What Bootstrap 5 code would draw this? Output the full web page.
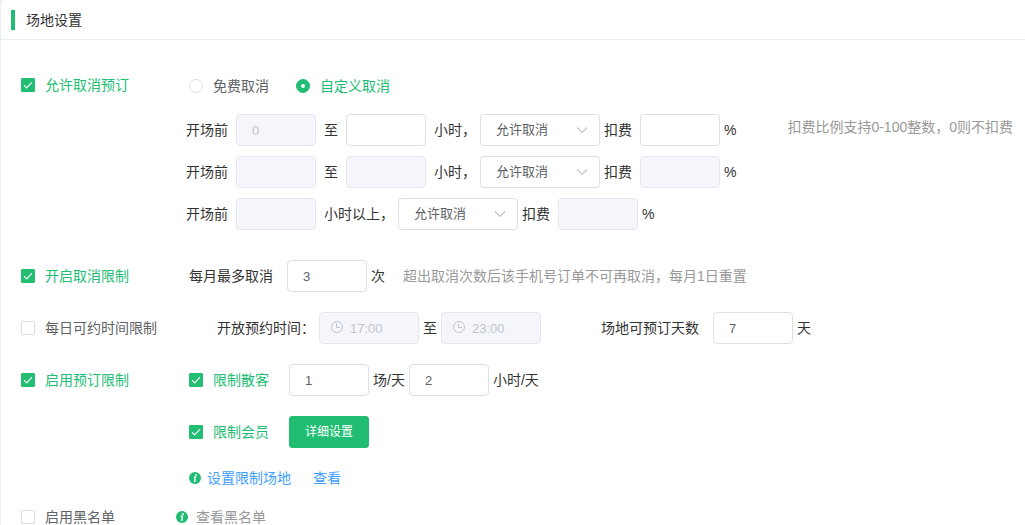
<!DOCTYPE html>
<html lang="zh-CN">
<head>
<meta charset="utf-8">
<meta name="viewport" content="width=device-width, initial-scale=1">
<title>场地设置</title>
<link href="https://cdn.jsdelivr.net/npm/bootstrap@5.3.0/dist/css/bootstrap.min.css" rel="stylesheet">
<style>
  :root { --brand: #20bd73; --line: #dcdfe6; --ink: #333; --soft: #606266; --hint: #999; }
  body { font: 14px/20px "Liberation Sans", "Noto Sans CJK SC", sans-serif; color: var(--ink); background: #e9edf8; }
  .panel { margin-left: 1px; background: #fff; border-top-left-radius: 4px; min-height: 100vh; }
  .panel-head { height: 40px; padding-left: 10px; border-bottom: 1px solid #ebeef0; }
  .panel-head h1 { font-size: 14px; line-height: 20px; border-left: 4px solid var(--brand); padding-left: 11px; }
  .panel-body { padding: 36px 12px 0 20px; white-space: nowrap; gap: 20px; }
  .setting-name { width: 155px; flex: none; }
  .inset { padding-left: 13px; }
  .rules { padding-left: 10px; gap: 10px; margin-bottom: 10px; }
  .radio-line { gap: 27px; min-height: 20px; padding-left: 3px; margin-bottom: 8px; }
  .g4 { gap: 4px; } .g6 { gap: 6px; } .g8 { gap: 8px; } .g14 { gap: 14px; } .g20 { gap: 20px; }
  .indent-s { padding-left: 41px; }
  .days { margin-left: 60px; }
  .rule-hint { margin-top: 41px; }
  .name-tall { height: 32px; }
  .form-check.tick { display: flex; align-items: center; gap: 10px; padding: 0; margin: 0; min-height: 18px; line-height: 18px; color: var(--soft); }
  .tick .form-check-input { float: none; margin: 0; width: 14px; height: 14px; border: 1px solid var(--line); flex: none; }
  .tick .form-check-input[type=checkbox] { border-radius: 1px; }
  .tick .form-check-input:checked { background-color: var(--brand); border-color: var(--brand); }
  .tick .form-check-input:checked[type=checkbox] { background-size: 12px 12px; background-image: url("data:image/svg+xml,%3csvg xmlns='http://www.w3.org/2000/svg' viewBox='0 0 12 12'%3e%3cpath d='M2 6.2l2.6 2.6L10 3.2' fill='none' stroke='%23fff' stroke-width='1.2'/%3e%3c/svg%3e"); }
  .tick .form-check-input:checked[type=radio] { background-size: 12px 12px; background-image: url("data:image/svg+xml,%3csvg xmlns='http://www.w3.org/2000/svg' viewBox='0 0 12 12'%3e%3ccircle cx='6' cy='6' r='2' fill='%23fff'/%3e%3c/svg%3e"); }
  .tick .form-check-input:checked + label { color: var(--brand); }
  .field.form-control, .field.form-select { width: 80px; height: 32px; padding: 0 15px; font-size: 13px; line-height: 30px; color: var(--soft); border: 1px solid var(--line); border-radius: 4px; flex: none; }
  .field.form-control:disabled { background-color: #f5f6fb; border-color: #e4e7ed; color: #c0c4cc; opacity: 1; }
  .field.form-select { width: 120px; background-position: right 10px center; background-size: 14px 14px; background-image: url("data:image/svg+xml,%3csvg xmlns='http://www.w3.org/2000/svg' viewBox='0 0 14 14'%3e%3cpath d='M2 4.5l5 5 5-5' fill='none' stroke='%23c0c4cc' stroke-width='1.1'/%3e%3c/svg%3e"); }
  .field.clock { width: 100px; padding-left: 30px; background-repeat: no-repeat; background-position: 10px 7px; background-size: 14px 14px; background-image: url("data:image/svg+xml,%3csvg xmlns='http://www.w3.org/2000/svg' viewBox='0 0 14 14'%3e%3cg fill='none' stroke='%23c0c4cc' stroke-width='1'%3e%3ccircle cx='7' cy='7' r='5.5'/%3e%3cpath d='M6.5 3.5v4h3.5'/%3e%3c/g%3e%3c/svg%3e"); }
  .hint { color: var(--hint); }
  .panel a { color: #409eff; text-decoration: none; }
  .panel a.hint { color: var(--hint); }
  .btn.detail { --bs-btn-bg: var(--brand); --bs-btn-border-color: var(--brand); --bs-btn-color: #fff; --bs-btn-hover-bg: #1aa864; --bs-btn-hover-color: #fff; width: 80px; height: 32px; padding: 0; font-size: 12px; border-radius: 3px; }
  .info { width: 12px; height: 12px; flex: none; }
</style>
</head>
<body>
<svg class="d-none" aria-hidden="true">
  <symbol id="info" viewBox="0 0 12 12">
    <circle cx="6" cy="6" r="6" fill="#20bd73"/>
    <circle cx="6.9" cy="3" r="1" fill="#fff"/>
    <path d="M4.7 5.2h1.8L5.6 9.2h1.2" fill="none" stroke="#fff" stroke-width="1.3"/>
  </symbol>
</svg>
<main class="panel">
  <header class="panel-head d-flex align-items-center"><h1 class="m-0 fw-normal">场地设置</h1></header>
  <form class="panel-body d-flex flex-column">

    <section class="d-flex align-items-start">
      <div class="setting-name">
        <div class="form-check tick"><input class="form-check-input" type="checkbox" id="allow" checked><label for="allow">允许取消预订</label></div>
      </div>
      <div class="rules d-flex flex-column">
        <div class="radio-line d-flex align-items-center">
          <div class="form-check tick"><input class="form-check-input" type="radio" name="mode" id="free"><label for="free">免费取消</label></div>
          <div class="form-check tick"><input class="form-check-input" type="radio" name="mode" id="custom" checked><label for="custom">自定义取消</label></div>
        </div>
        <div class="d-flex align-items-center g4">
          <div class="d-flex align-items-center g8">
            <label for="from1">开场前</label><input class="form-control field" id="from1" value="0" disabled>
            <label for="to1">至</label><input class="form-control field" id="to1"><span>小时，</span>
          </div>
          <select class="form-select field" aria-label="取消方式一"><option>允许取消</option><option>不可取消</option></select>
          <div class="d-flex align-items-center g8"><label for="fee1">扣费</label><input class="form-control field" id="fee1"></div>
          <span>%</span>
        </div>
        <div class="d-flex align-items-center g4">
          <div class="d-flex align-items-center g8">
            <label for="from2">开场前</label><input class="form-control field" id="from2" disabled>
            <label for="to2">至</label><input class="form-control field" id="to2" disabled><span>小时，</span>
          </div>
          <select class="form-select field" aria-label="取消方式二"><option>允许取消</option><option>不可取消</option></select>
          <div class="d-flex align-items-center g8"><label for="fee2">扣费</label><input class="form-control field" id="fee2" disabled></div>
          <span>%</span>
        </div>
        <div class="d-flex align-items-center g4">
          <div class="d-flex align-items-center g8">
            <label for="from3">开场前</label><input class="form-control field" id="from3" disabled><span>小时以上，</span>
          </div>
          <select class="form-select field" aria-label="取消方式三"><option>允许取消</option><option>不可取消</option></select>
          <div class="d-flex align-items-center g8"><label for="fee3">扣费</label><input class="form-control field" id="fee3" disabled></div>
          <span>%</span>
        </div>
      </div>
      <div class="rule-hint hint ms-auto">扣费比例支持0-100整数，0则不扣费</div>
    </section>

    <section class="d-flex align-items-center">
      <div class="setting-name">
        <div class="form-check tick"><input class="form-check-input" type="checkbox" id="limit" checked><label for="limit">开启取消限制</label></div>
      </div>
      <div class="inset d-flex align-items-center g14">
        <label for="times">每月最多取消</label>
        <div class="d-flex align-items-center g4"><input class="form-control field" id="times" value="3"><span>次</span></div>
        <span class="hint ms-1">超出取消次数后该手机号订单不可再取消，每月1日重置</span>
      </div>
    </section>

    <section class="d-flex align-items-center">
      <div class="setting-name">
        <div class="form-check tick"><input class="form-check-input" type="checkbox" id="daily"><label for="daily">每日可约时间限制</label></div>
      </div>
      <div class="indent-s d-flex align-items-center g4">
        <label for="open">开放预约时间：</label><input class="form-control field clock" id="open" value="17:00" disabled>
        <label for="close">至</label><input class="form-control field clock" id="close" value="23:00" disabled>
      </div>
      <div class="days d-flex align-items-center g14">
        <label for="days">场地可预订天数</label>
        <div class="d-flex align-items-center g4"><input class="form-control field" id="days" value="7"><span>天</span></div>
      </div>
    </section>

    <section class="d-flex align-items-start">
      <div class="setting-name name-tall d-flex align-items-center">
        <div class="form-check tick"><input class="form-check-input" type="checkbox" id="booking" checked><label for="booking">启用预订限制</label></div>
      </div>
      <div class="inset d-flex flex-column g20">
        <div class="d-flex align-items-center g20">
          <div class="form-check tick"><input class="form-check-input" type="checkbox" id="guest" checked><label for="guest">限制散客</label></div>
          <div class="d-flex align-items-center g4">
            <input class="form-control field" id="games" value="1"><label for="games">场/天</label>
            <input class="form-control field" id="hours" value="2"><label for="hours">小时/天</label>
          </div>
        </div>
        <div class="d-flex align-items-center g20">
          <div class="form-check tick"><input class="form-check-input" type="checkbox" id="member" checked><label for="member">限制会员</label></div>
          <button type="button" class="btn detail">详细设置</button>
        </div>
        <div class="d-flex align-items-center g6">
          <svg class="info" aria-hidden="true"><use href="#info"/></svg>
          <a href="#">设置限制场地</a><a href="#" class="ms-3">查看</a>
        </div>
      </div>
    </section>

    <section class="d-flex align-items-center">
      <div class="setting-name">
        <div class="form-check tick"><input class="form-check-input" type="checkbox" id="black"><label for="black">启用黑名单</label></div>
      </div>
      <div class="d-flex align-items-center g8">
        <svg class="info" aria-hidden="true"><use href="#info"/></svg><a href="#" class="hint lh-1">查看黑名单</a>
      </div>
    </section>
  </form>
</main>
<script src="https://cdn.jsdelivr.net/npm/bootstrap@5.3.0/dist/js/bootstrap.bundle.min.js"></script>
</body>
</html>
